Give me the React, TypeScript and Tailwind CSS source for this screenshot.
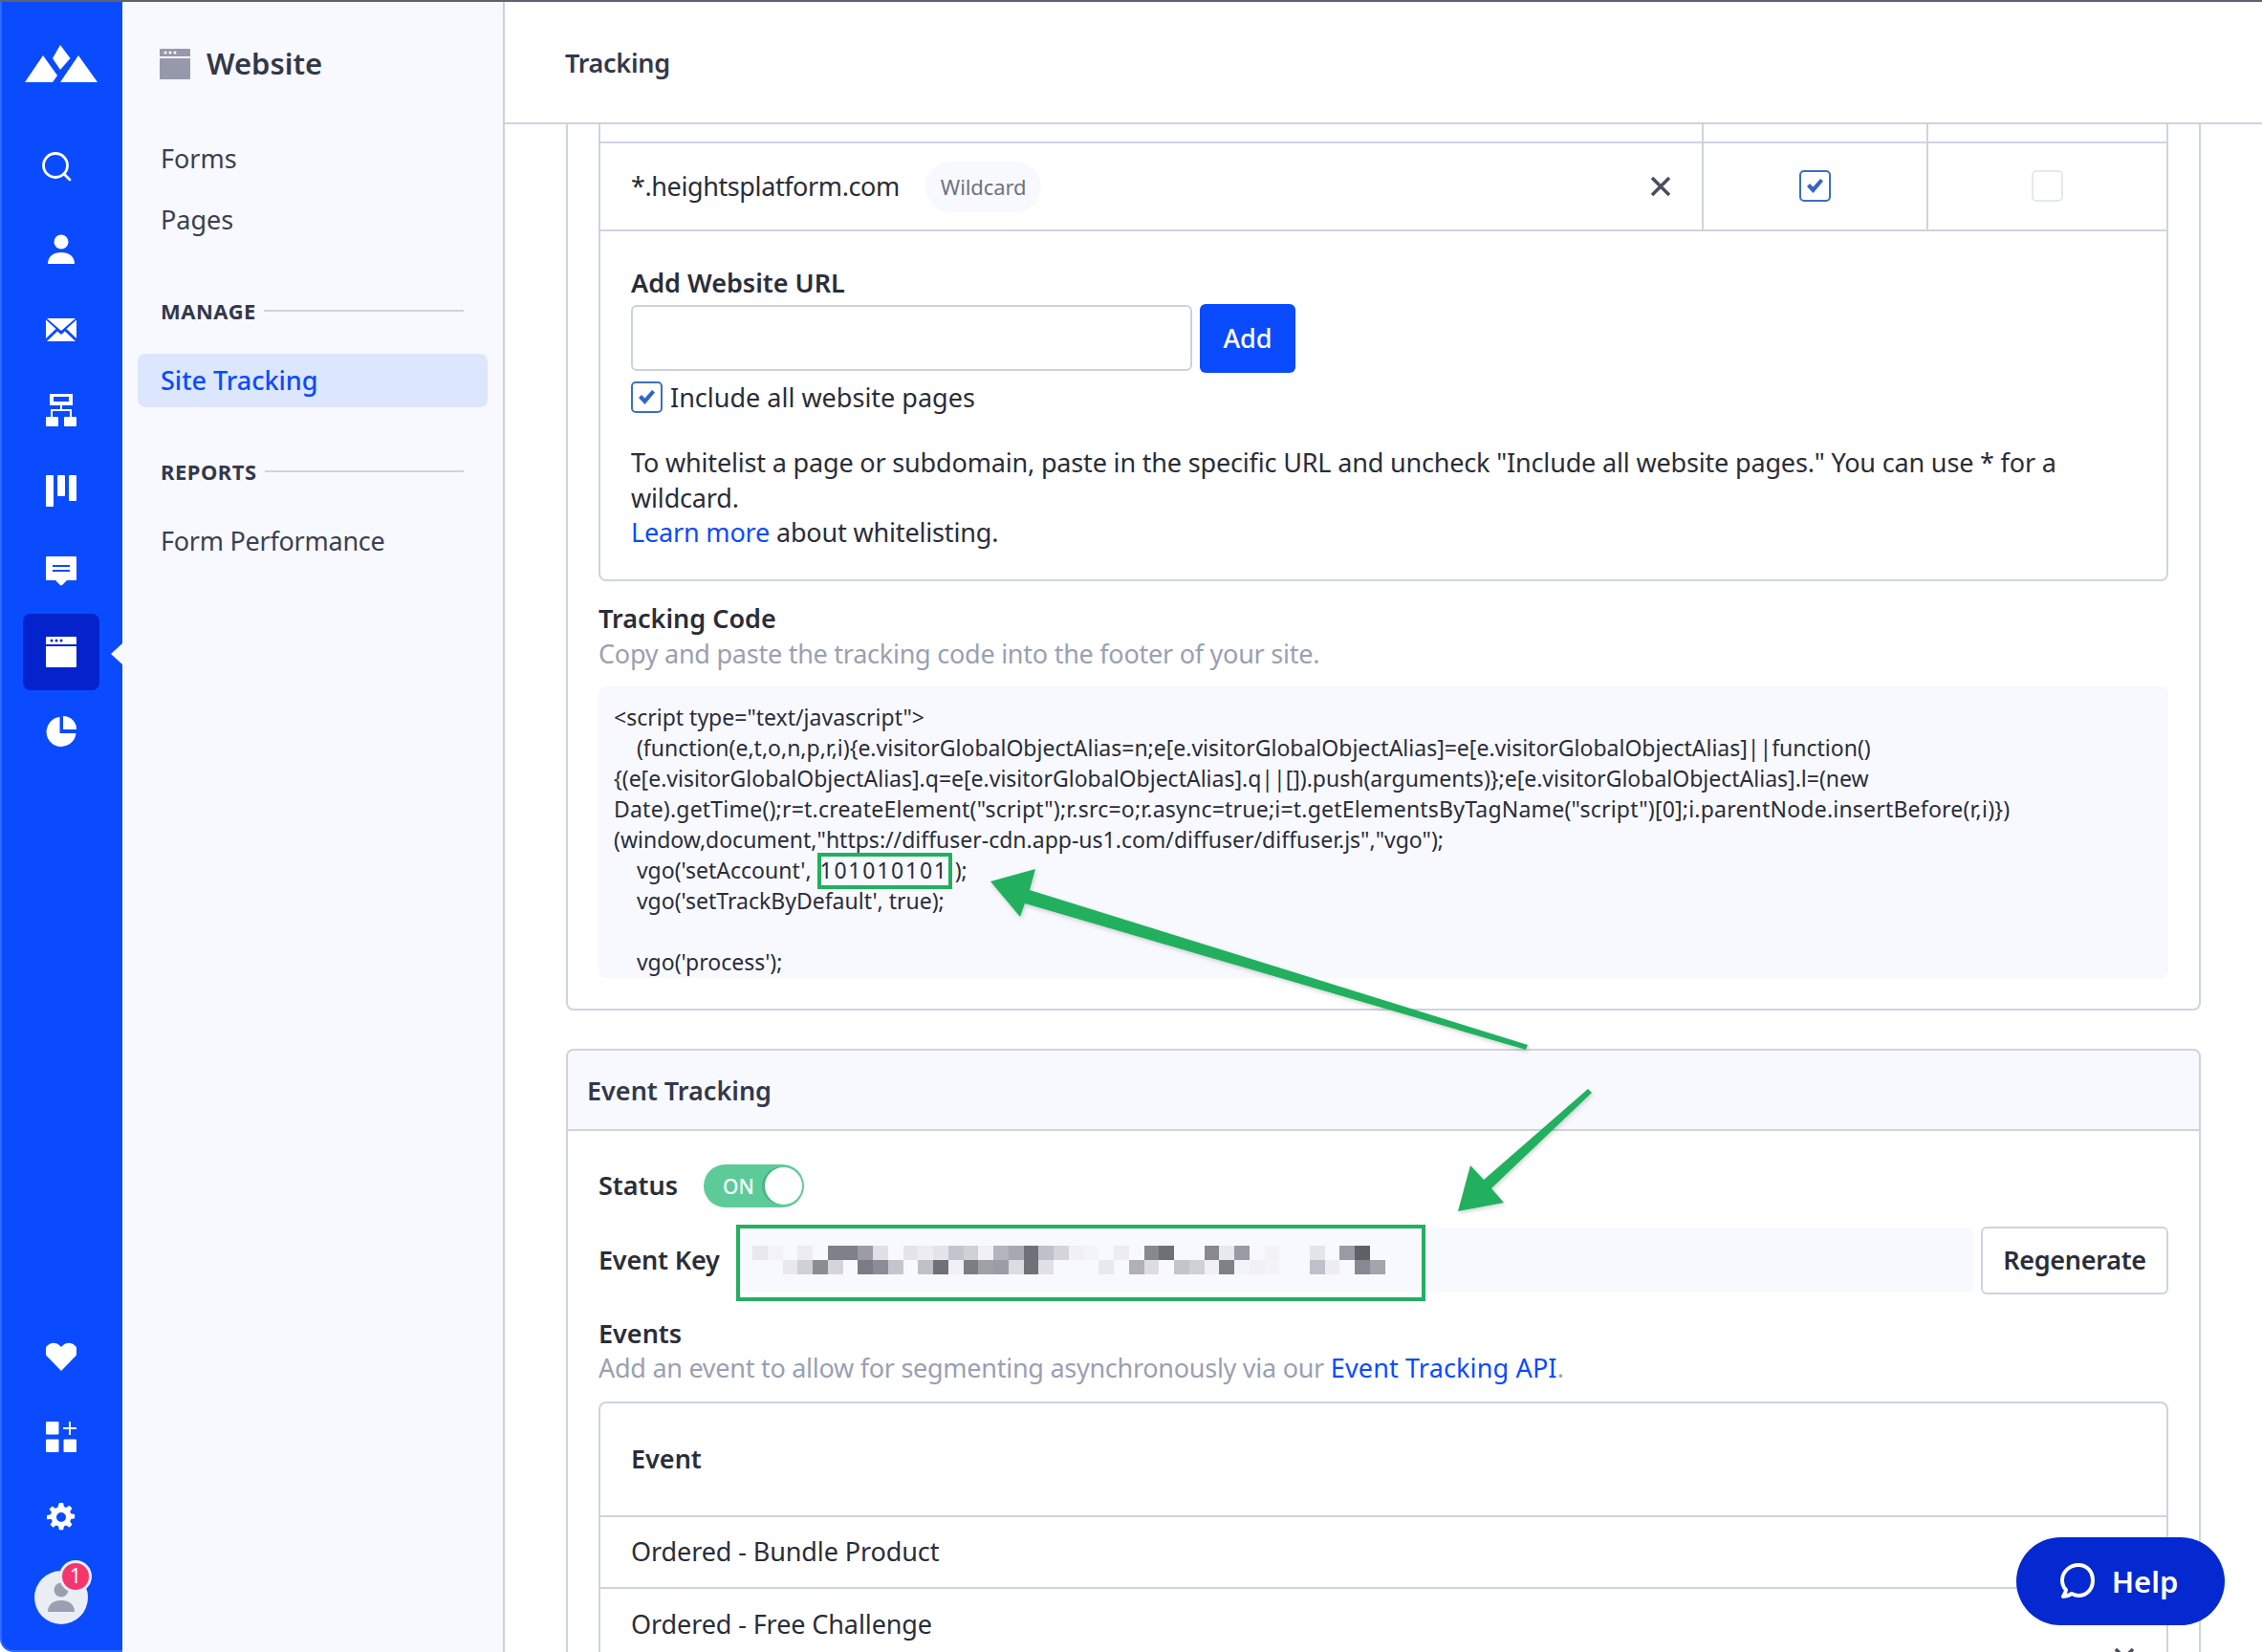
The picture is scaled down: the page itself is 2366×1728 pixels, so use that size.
const font = "[font-family:'Noto_Sans',sans-serif]"

const pixelsTop = ["e8e8ee","f2f2f7","","ececf2","","808088","808088","9c9ca4","e0e0e6","","e4e4ea","ececf2","e4e4ea","c4c4cc","d0d0d6","f0f0f5","b4b4bc","a8a8b0","707078","c0c0c8","d4d4da","f0f0f5","f4f4f8","","ececf2","","88888f","6f6f78","","","88888f","e8e8ee","9a9aa2","","f2f2f7","","","e4e4ea","","9a9aa2","606068",""]
const pixelsBottom = ["","","e8e8ee","d0d0d6","8c8c94","d4d4da","","7c7c84","8c8c94","c4c4cc","","c0c0c8","707078","f0f0f5","7c7c84","a0a0a8","9c9ca4","dcdce2","707078","e0e0e6","","","","e8e8ee","","b0b0b8","dcdce2","","c4c4cc","d0d0d6","f0f0f5","808088","f4f4f8","f0f0f5","f4f4f8","","","c0c0c8","ececf2","","888890","a4a4ac"]

const SearchIcon = () => (
  <svg className="mr-[10px] mb-[5px]" width="32" height="32" viewBox="0 0 32 32" fill="none" stroke="white" strokeWidth="2.800" strokeLinecap="round">
    <circle cx="15" cy="14" r="12.500" />
    <path d="M24 23l6 6" />
  </svg>
)
const PersonIcon = () => (
  <svg width="28" height="32" viewBox="0 0 28 32" fill="white">
    <circle cx="14" cy="8" r="7.500" />
    <path d="M0 31c0-8 6-12 14-12s14 4 14 12z" />
  </svg>
)
const MailIcon = () => (
  <svg width="32" height="24" viewBox="0 0 32 24" fill="white">
    <path d="M1 0h30L16 13z" />
    <path d="M0 1.500L10.500 11 0 21z" />
    <path d="M32 1.500L21.500 11 32 21z" />
    <path d="M1 24l11-10.500 4 3.500 4-3.500L31 24z" />
  </svg>
)
const FlowIcon = () => (
  <svg width="32" height="34" viewBox="0 0 32 34" fill="white">
    <path fillRule="evenodd" d="M4 0h24v12H17v4h10v8h-2v-6H7v6H5v-8h10v-4H4zM8 3v5h16V3z" />
    <rect x="0" y="24" width="13" height="10" rx="1" />
    <rect x="19" y="24" width="13" height="10" rx="1" />
  </svg>
)
const BoardIcon = () => (
  <svg width="32" height="33" viewBox="0 0 32 33" fill="white">
    <rect width="8" height="33" rx="1" />
    <rect x="12" width="8" height="22" rx="1" />
    <rect x="24" width="8" height="27" rx="1" />
  </svg>
)
const ChatIcon = () => (
  <svg width="32" height="31" viewBox="0 0 32 31" fill="white">
    <path fillRule="evenodd" d="M1 0h30a1 1 0 011 1v23a1 1 0 01-1 1h-9l-5 5a1.500 1.500 0 01-2 0l-5-5H1a1 1 0 01-1-1V1a1 1 0 011-1zM7 9v2h18V9zM7 14v2h18v-2z" />
  </svg>
)
const WindowIcon = ({ fill, dots }: { fill: string; dots: string }) => (
  <svg width="32" height="32" viewBox="0 0 32 32">
    <path fill={fill} d="M1 0h30a1 1 0 011 1v7H0V1a1 1 0 011-1zM0 10h32v21a1 1 0 01-1 1H1a1 1 0 01-1-1z" />
    <circle cx="6" cy="4" r="1.500" fill={dots} />
    <circle cx="11" cy="4" r="1.500" fill={dots} />
    <circle cx="16" cy="4" r="1.500" fill={dots} />
  </svg>
)
const PieIcon = () => (
  <svg width="32" height="32" viewBox="0 0 32 32" fill="white">
    <path d="M14.500 1v17h17A15.500 15.500 0 1 1 14.500 1z" />
    <path d="M18 0a14 14 0 0114 14H18z" />
  </svg>
)
const HeartIcon = () => (
  <svg width="32" height="30" viewBox="0 0 32 30" fill="white">
    <path d="M16 30L2.500 16A8.500 8.500 0 0 1 1 4 9 9 0 0 1 14 3l2 2 2-2a9 9 0 0 1 13 1 8.500 8.500 0 0 1-1.500 12z" />
  </svg>
)
const AppsIcon = () => (
  <svg width="32" height="32" viewBox="0 0 32 32" fill="white">
    <rect width="13.500" height="13.500" rx="1" />
    <rect y="18.500" width="13.500" height="13.500" rx="1" />
    <rect x="18.500" y="18.500" width="13.500" height="13.500" rx="1" />
    <path d="M24 0h2v6h6v2h-6v6h-2V8h-6V6h6z" />
  </svg>
)
const GearIcon = () => (
  <svg width="30" height="30" viewBox="0 0 24 24" fill="white">
    <path fillRule="evenodd" d="M10.300 0h3.400l.6 3.100 1.900.8 2.600-1.800 2.400 2.400-1.800 2.600.8 1.900 3.100.6v3.400l-3.100.6-.8 1.900 1.800 2.600-2.400 2.400-2.600-1.800-1.900.8-.6 3.100h-3.400l-.6-3.100-1.900-.8-2.600 1.800-2.400-2.400 1.800-2.600-.8-1.900L0 13.700v-3.400l3.100-.6.8-1.900-1.800-2.600 2.400-2.400 2.600 1.800 1.900-.8zM12 8a4 4 0 100 8 4 4 0 000-8z" />
  </svg>
)

const NavCell = ({ children }: { children: React.ReactNode }) => (
  <div className="h-[84px] flex items-center justify-center">{children}</div>
)

const Checkbox = ({ checked }: { checked?: boolean }) => (
  <span className={`shrink-0 w-[33px] h-[33px] rounded-[5px] border-2 flex items-center justify-center bg-white ${checked ? "border-[#3b6fbf]" : "border-[#e6e8ee]"}`}>
    {checked && (
      <svg width="19" height="19" viewBox="0 0 19 19" fill="#2f67c4">
        <path d="M1 10l3-3 3.500 3.500L15 2l3 2.500L7.500 17z" />
      </svg>
    )}
  </span>
)

const Sidebar = () => (
  <aside className="relative w-[128px] shrink-0 flex flex-col pr-[2px] bg-[#0a4bff] border-l-2 border-b-2 border-[#2f6bff] rounded-bl-[14px]">
    <div className="h-[133px] pt-[45px] flex justify-center">
      <svg width="76" height="39" viewBox="0 0 76 39" fill="white">
        <path d="M0 39L19 11l15 21-5 7z" />
        <path d="M37 0l10.500 14L37 26l-8-12z" />
        <path d="M37 39l19-28 20 28z" />
      </svg>
    </div>
    <NavCell><SearchIcon /></NavCell>
    <NavCell><PersonIcon /></NavCell>
    <NavCell><MailIcon /></NavCell>
    <NavCell><FlowIcon /></NavCell>
    <NavCell><BoardIcon /></NavCell>
    <NavCell><ChatIcon /></NavCell>
    <div className="h-[84px] pb-[1px] flex items-end justify-center">
      <div className="w-[80px] h-[80px] rounded-lg bg-[#0423cc] flex items-center justify-center">
        <WindowIcon fill="white" dots="#0423cc" />
      </div>
      <span className="absolute right-0 top-[671px] w-0 h-0 border-y-[11px] border-y-transparent border-r-[12px] border-r-[#f8f9ff]" />
    </div>
    <NavCell><PieIcon /></NavCell>
    <div className="mt-auto mb-[13px]">
      <NavCell><HeartIcon /></NavCell>
      <NavCell><AppsIcon /></NavCell>
      <NavCell><GearIcon /></NavCell>
      <div className="h-[84px] flex items-center justify-center">
        <div className="relative w-[56px] h-[56px] rounded-full bg-[#ebedf5] flex items-center justify-center">
          <svg width="28" height="32" viewBox="0 0 28 32" fill="#9a9fb1">
            <circle cx="14" cy="8" r="7.500" />
            <path d="M0 31c0-8 6-12 14-12s14 4 14 12z" />
          </svg>
          <span className="absolute -top-[11px] -right-[4px] w-[34px] h-[34px] rounded-full border-[3px] border-[#ebedf5] bg-[#f5366e] text-white text-[21px] leading-[26px] text-center">1</span>
        </div>
      </div>
    </div>
  </aside>
)

const SubNav = () => (
  <aside className="w-[400px] shrink-0 bg-[#f8f9ff] border-r-2 border-[#ccd0de] text-[27px] text-[#3a3f51]">
    <div className="h-[129px] flex items-center pl-[39px] gap-[17px]">
      <WindowIcon fill="#9599ab" dots="white" />
      <h1 className="text-[31px] font-semibold text-[#33384a]">Website</h1>
    </div>
    <div className="pl-[40px] pt-[14px]">
      <div className="h-[42px] leading-[42px]">Forms</div>
      <div className="h-[42px] leading-[42px] mt-[22px]">Pages</div>
    </div>
    <div className="ml-[40px] mr-[41px] mt-[58px] flex items-center gap-[8px] text-[22px] font-bold tracking-[0.5px] text-[#33384a] h-[32px]">
      MANAGE
      <span className="flex-1 h-[2px] bg-[#cfd2df]" />
    </div>
    <div className="mx-[16px] mt-[29px] h-[56px] pl-[24px] rounded-lg bg-[#dce6fd] text-[#0a4bff] font-medium flex items-center">Site Tracking</div>
    <div className="ml-[40px] mr-[41px] mt-[51px] flex items-center gap-[8px] text-[22px] font-bold tracking-[0.5px] text-[#33384a] h-[32px]">
      REPORTS
      <span className="flex-1 h-[2px] bg-[#cfd2df]" />
    </div>
    <div className="pl-[40px] mt-[36px] h-[42px] leading-[42px] tracking-[-0.25px]">Form Performance</div>
  </aside>
)

const EventKeyBlur = () => (
  <svg width="662" height="30" viewBox="0 0 662 30" shapeRendering="crispEdges">
    {pixelsTop.map((c, i) => c && <rect key={i} x={i * 15.75} y="0" width="15.75" height="15" fill={`#${c}`} />)}
    {pixelsBottom.map((c, i) => c && <rect key={i} x={i * 15.75} y="15" width="15.75" height="15" fill={`#${c}`} />)}
  </svg>
)

// green callouts drawn on top of the screenshot
const Callouts = () => (
  <svg className="absolute left-0 top-0 pointer-events-none" width="2366" height="1728" viewBox="0 0 2366 1728">
    <defs>
      <filter id="soft" x="-5%" y="-5%" width="110%" height="110%">
        <feDropShadow dx="1" dy="2" stdDeviation="2" floodColor="#000" floodOpacity="0.18" />
      </filter>
    </defs>
    <g filter="url(#soft)" fill="#22b05f">
      <polygon points="1036,922 1083,909 1077,931 1598,1093 1596,1098 1072,945 1067,959" />
      <polygon points="1525,1267 1538,1219 1552,1234 1661,1139 1665,1143 1560,1243 1573,1258" />
    </g>
    <rect x="857" y="894" width="137" height="34" fill="none" stroke="#22b05f" strokeWidth="4" />
    <rect x="772" y="1283" width="717" height="76" fill="none" stroke="#22b05f" strokeWidth="4" />
  </svg>
)

const App = () => {
  return (
    <div className={`relative w-[2366px] h-[1728px] overflow-hidden bg-[#1f2430] ${font} text-[27px] text-[#2a2d38]`}>
      <div className="h-[2px] bg-[#5d6170]" />
      <div className="flex h-[1726px] bg-white">
        <Sidebar />
        <SubNav />
        <main className="flex-1 min-w-0 flex flex-col bg-white">
          <header className="h-[128px] shrink-0 flex items-center pl-[63px] pt-[2px] border-b-2 border-[#cfd3e0] text-[27px] font-semibold tracking-[-0.3px] text-[#33384a]">Tracking</header>
          <div className="flex-1 min-h-0 overflow-hidden pl-[64px] pr-[64px]">
            <section className="border-x-2 border-b-2 border-[#cfd3e0] rounded-b-lg px-[32px] pb-[32px]">
              <div className="border-x-2 border-b-2 border-[#cfd3e0] rounded-b-lg">
                <div className="flex h-[20px] border-b-2 border-[#cfd3e0]">
                  <div className="flex-1" />
                  <div className="w-[235px] border-l-2 border-[#cfd3e0]" />
                  <div className="w-[251px] border-l-2 border-[#cfd3e0]" />
                </div>
                <div className="flex h-[92px] border-b-2 border-[#cfd3e0]">
                  <div className="flex-1 flex items-center pl-[32px] pr-[32px]">
                    <span className="tracking-[-0.4px]">*.heightsplatform.com</span>
                    <span className="ml-[27px] h-[53px] px-[16px] rounded-full bg-[#f8f9ff] text-[22px] tracking-[-0.1px] text-[#6f7280] flex items-center">Wildcard</span>
                    <svg className="ml-auto mb-[1px]" width="22" height="22" viewBox="0 0 22 22" stroke="#4a4e5c" strokeWidth="3.500" fill="none"><path d="M2 2l18 18M20 2L2 20" /></svg>
                  </div>
                  <div className="w-[235px] pb-[2px] border-l-2 border-[#cfd3e0] flex items-center justify-center"><Checkbox checked /></div>
                  <div className="w-[251px] pb-[2px] border-l-2 border-[#cfd3e0] flex items-center justify-center"><Checkbox /></div>
                </div>
                <div className="px-[32px] pt-[35px] pb-[30px]">
                  <h3 className="font-semibold leading-[37px] text-[27px]">Add Website URL</h3>
                  <div className="flex gap-[8px] mt-[4px]">
                    <input className="w-[587px] h-[69px] mt-[1px] rounded-md border-2 border-[#cdd1de] bg-white" />
                    <button className="w-[100px] h-[72px] rounded-md bg-[#0a4bff] text-white font-medium">Add</button>
                  </div>
                  <label className="flex items-center gap-[8px] mt-[8px] h-[34px]"><Checkbox checked /><span className="pt-[2px]">Include all website pages</span></label>
                  <p className="mt-[34px] leading-[36.500px] tracking-[-0.17px]">
                    To whitelist a page or subdomain, paste in the specific URL and uncheck "Include all website pages." You can use * for a<br />
                    wildcard.<br />
                    <span className="text-[#0a4bff]">Learn more</span> about whitelisting.
                  </p>
                </div>
              </div>
              <h3 className="mt-[20px] font-semibold leading-[38px]">Tracking Code</h3>
              <p className="leading-[36px] tracking-[-0.25px] text-[#9a9fb3]">Copy and paste the tracking code into the footer of your site.</p>
              <div className="mt-[16px] h-[305px] overflow-hidden whitespace-pre rounded-md bg-[#f8f9ff] pl-[16px] pt-[16px] text-[23px] leading-[32px] text-[#2a2d38]">
                <div>{'<script type="text/javascript">'}</div>
                <div>{'    (function(e,t,o,n,p,r,i){e.visitorGlobalObjectAlias=n;e[e.visitorGlobalObjectAlias]=e[e.visitorGlobalObjectAlias]||function()'}</div>
                <div>{'{(e[e.visitorGlobalObjectAlias].q=e[e.visitorGlobalObjectAlias].q||[]).push(arguments)};e[e.visitorGlobalObjectAlias].l=(new'}</div>
                <div className="tracking-[0.21px]">{'Date).getTime();r=t.createElement("script");r.src=o;r.async=true;i=t.getElementsByTagName("script")[0];i.parentNode.insertBefore(r,i)})'}</div>
                <div>{'(window,document,"https://diffuser-cdn.app-us1.com/diffuser/diffuser.js","vgo");'}</div>
                <div>{"    vgo('setAccount', "}<span className="ml-[3px] tracking-[1.75px]">101010101</span><span className="ml-[7px]">{");"}</span></div>
                <div>{"    vgo('setTrackByDefault', true);"}</div>
                <div>{" "}</div>
                <div>{"    vgo('process');"}</div>
              </div>
            </section>
            <section className="mt-[40px] border-2 border-[#cfd3e0] rounded-lg">
              <h3 className="h-[84px] flex items-center pl-[20px] pt-[3px] bg-[#f8f9ff] rounded-t-lg border-b-2 border-[#cfd3e0] font-semibold text-[#33384a]">Event Tracking</h3>
              <div className="px-[32px] pt-[35px]">
                <div className="flex items-center h-[45px]">
                  <span className="w-[110px] font-semibold">Status</span>
                  <div className="relative w-[105px] h-[45px] rounded-full bg-[#5dcb98] text-white text-[21px] font-medium flex items-center pl-[20px] pt-[3px]">
                    ON
                    <span className="absolute right-[2px] top-[3px] w-[39px] h-[39px] rounded-full bg-white shadow-[-3px_0_0_#49b583]" />
                  </div>
                </div>
                <div className="flex items-center mt-[20px] gap-[7px]">
                  <span className="w-[136px] shrink-0 font-semibold tracking-[-0.2px]">Event Key</span>
                  <div className="flex-1 h-[68px] rounded-md bg-[#f8f9ff] flex items-center pl-[18px]"><EventKeyBlur /></div>
                  <button className="w-[196px] h-[71px] rounded-md border-2 border-[#cfd3e0] bg-white font-semibold tracking-[-0.3px]">Regenerate</button>
                </div>
                <h3 className="mt-[23px] font-semibold leading-[36px]">Events</h3>
                <p className="leading-[36px] tracking-[-0.27px] text-[#9a9fb3]">Add an event to allow for segmenting asynchronously via our <span className="text-[#0a4bff] tracking-[0.15px]">Event Tracking API</span>.</p>
                <div className="mt-[17px] border-2 border-b-0 border-[#cfd3e0] rounded-t-lg">
                  <div className="h-[119px] flex items-center pl-[32px] font-semibold border-b-2 border-[#cfd3e0]">Event</div>
                  <div className="h-[75px] flex items-center pl-[32px] border-b-2 border-[#cfd3e0] tracking-[-0.1px]">Ordered - Bundle Product</div>
                  <div className="h-[75px] flex items-center pl-[32px] tracking-[-0.1px]">
                    <span>Ordered - Free Challenge</span>
                    <svg className="ml-auto mr-[33px] mt-[70px]" width="22" height="22" viewBox="0 0 22 22" stroke="#4a4e5c" strokeWidth="3.500" fill="none"><path d="M2 2l18 18M20 2L2 20" /></svg>
                  </div>
                </div>
              </div>
            </section>
          </div>
        </main>
      </div>
      <Callouts />
      <button className="absolute left-[2109px] top-[1608px] w-[218px] h-[92px] rounded-[46px] bg-[#0429d1] text-white text-[31px] font-semibold flex items-center justify-center gap-[17px]">
        <svg className="-ml-[4px]" width="38" height="40" viewBox="0 0 38 40" fill="none" stroke="white" strokeWidth="4" strokeLinejoin="round">
          <path d="M20 3c9 0 15 7 15 16s-6 16-15 16c-3 0-5-1-7-2-3 2-6 3-9 3 1-2 3-5 3-7-3-3-4-6-4-10C3 10 11 3 20 3z" />
        </svg>
        Help
      </button>
    </div>
  )
}

export default App
